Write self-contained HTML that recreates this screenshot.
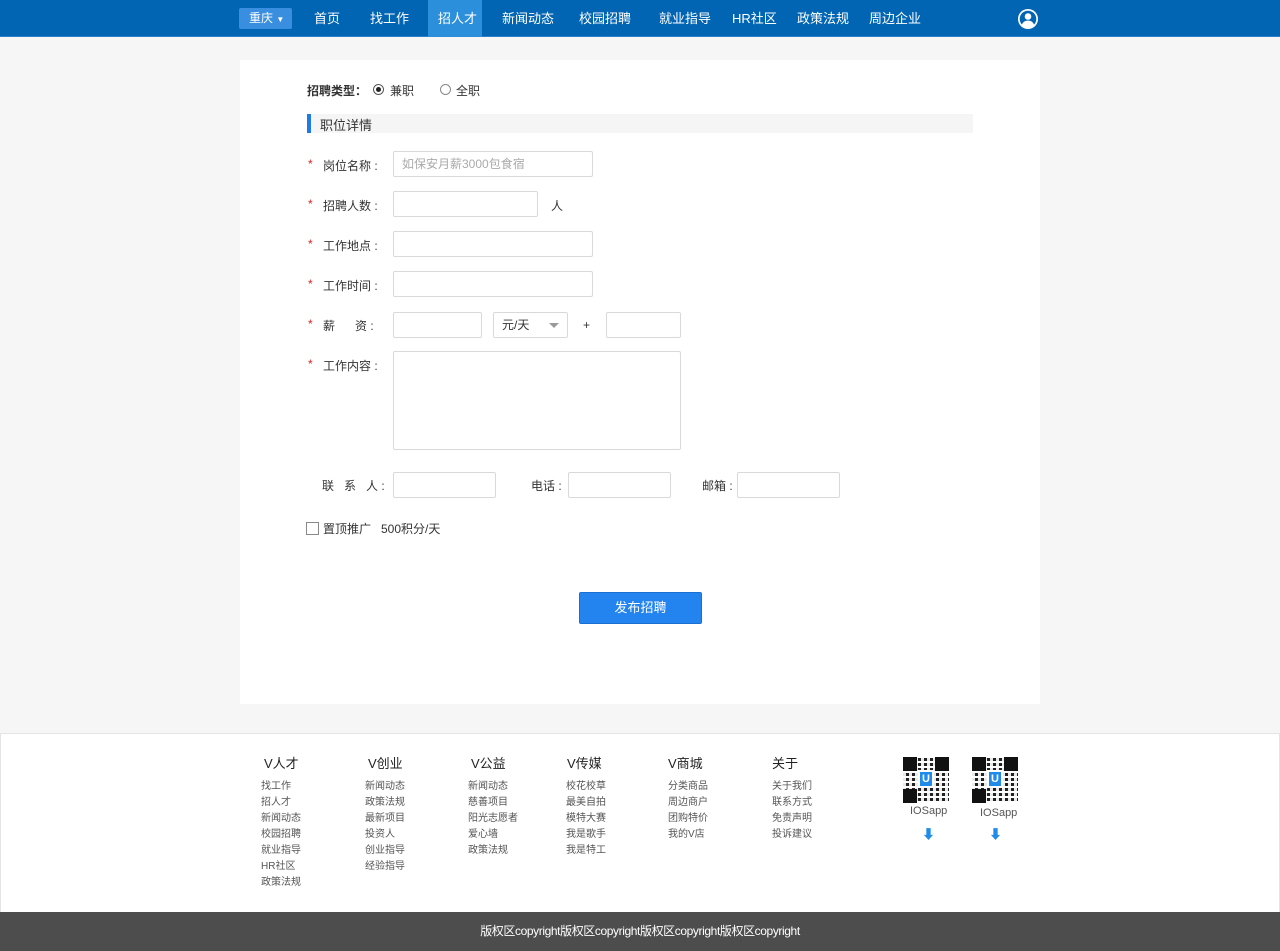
<!DOCTYPE html>
<html><head><meta charset="utf-8"><style>
*{margin:0;padding:0;box-sizing:border-box}
body{width:1280px;height:951px;background:#f6f6f6;font-family:"Liberation Sans","Noto Sans CJK SC",sans-serif;font-size:12px;color:#333;position:relative;overflow:hidden}
.a{position:absolute}
.nav{left:0;top:0;width:1280px;height:37px;background:#0265b3;border-bottom:1px solid #2b7fc8}
.nav span{position:absolute;top:0;line-height:37px;color:#fff;font-size:13px}
.card{left:240px;top:60px;width:800px;height:644px;background:#fff}
.in{position:absolute;border:1px solid #d9d9d9;height:26px;background:#fff;border-radius:2px}
.lb{position:absolute;font-size:12px;color:#333}
.st{position:absolute;color:#e02020;font-size:12px}
.foot{left:0;top:733px;width:1280px;height:180px;background:#fff;border:1px solid #e4e4e4}
.col{position:absolute;top:755px;font-size:10px;color:#555;line-height:16px}
.col b{display:block;font-weight:normal;font-size:13px;color:#222;margin-bottom:6px;line-height:18px}
.qr{position:absolute;width:46px;height:46px;background:
linear-gradient(#111,#111) 0 0/14px 14px no-repeat,
linear-gradient(#111,#111) 32px 0/14px 14px no-repeat,
linear-gradient(#111,#111) 0 32px/14px 14px no-repeat,
repeating-linear-gradient(90deg,rgba(255,255,255,.9) 0 3px,transparent 3px 6px),
repeating-linear-gradient(0deg,#fff 0 2px,#222 2px 5px)}
</style></head><body>
<div class="a nav">
<div class="a" style="left:239px;top:8px;width:53px;height:21px;background:#3a8ee0;border-radius:2px;color:#fff;font-size:12px;line-height:21px;padding-left:10px">重庆 <span style="position:static;font-size:8px;line-height:21px">▼</span></div>
<span style="left:314px">首页</span>
<span style="left:370px">找工作</span>
<div class="a" style="left:428px;top:0;width:54px;height:37px;background:#2c8fdc"></div>
<span style="left:438px">招人才</span>
<span style="left:502px">新闻动态</span>
<span style="left:579px">校园招聘</span>
<span style="left:659px">就业指导</span>
<span style="left:732px">HR社区</span>
<span style="left:797px">政策法规</span>
<span style="left:869px">周边企业</span>
<svg class="a" style="left:1017px;top:8px" width="22" height="22" viewBox="0 0 22 22"><circle cx="11" cy="11" r="10" fill="#fff"/><circle cx="11" cy="11" r="8.3" fill="#0265b3"/><circle cx="11" cy="8.5" r="3.3" fill="#fff"/><path d="M4.8 17c1-3.2 3.4-4.4 6.2-4.4s5.2 1.2 6.2 4.4a8 8 0 0 1-12.4 0z" fill="#fff"/></svg>
</div>
<div class="a card"></div>
<div class="lb" style="left:307px;top:82px;font-weight:bold">招聘类型：</div>
<div class="a" style="left:373px;top:84px;width:11px;height:11px;border:1px solid #555;border-radius:50%"><div class="a" style="left:2px;top:2px;width:5px;height:5px;border-radius:50%;background:#222"></div></div>
<div class="lb" style="left:390px;top:82px">兼职</div>
<div class="a" style="left:440px;top:84px;width:11px;height:11px;border:1px solid #888;border-radius:50%"></div>
<div class="lb" style="left:456px;top:82px">全职</div>
<div class="a" style="left:307px;top:114px;width:666px;height:19px;background:#f5f5f5;border-left:4px solid #1e7ae6"></div>
<div class="lb" style="left:320px;top:115px;font-size:13px">职位详情</div>

<div class="st" style="left:308px;top:157px">*</div><div class="lb" style="left:323px;top:157px">岗位名称 :</div>
<div class="in" style="left:393px;top:151px;width:200px;color:#aaa;padding-left:8px;line-height:24px">如保安月薪3000包食宿</div>
<div class="st" style="left:308px;top:197px">*</div><div class="lb" style="left:323px;top:197px">招聘人数 :</div>
<div class="in" style="left:393px;top:191px;width:145px"></div><div class="lb" style="left:551px;top:197px">人</div>
<div class="st" style="left:308px;top:237px">*</div><div class="lb" style="left:323px;top:237px">工作地点 :</div>
<div class="in" style="left:393px;top:231px;width:200px"></div>
<div class="st" style="left:308px;top:277px">*</div><div class="lb" style="left:323px;top:277px">工作时间 :</div>
<div class="in" style="left:393px;top:271px;width:200px"></div>
<div class="st" style="left:308px;top:317px">*</div><div class="lb" style="left:323px;top:317px">薪&nbsp;&nbsp;&nbsp;&nbsp;&nbsp;&nbsp;资 :</div>
<div class="in" style="left:393px;top:312px;width:89px"></div>
<div class="in" style="left:493px;top:312px;width:75px;padding-left:8px;line-height:24px">元/天<div class="a" style="left:55px;top:10px;width:0;height:0;border:5px solid transparent;border-top-color:#999"></div></div>
<div class="lb" style="left:583px;top:318px">+</div>
<div class="in" style="left:606px;top:312px;width:75px"></div>
<div class="st" style="left:308px;top:357px">*</div><div class="lb" style="left:323px;top:357px">工作内容 :</div>
<div class="in" style="left:393px;top:351px;width:288px;height:99px"></div>
<div class="lb" style="left:322px;top:477px">联&nbsp;&nbsp;&nbsp;系&nbsp;&nbsp;&nbsp;人 :</div>
<div class="in" style="left:393px;top:472px;width:103px"></div>
<div class="lb" style="left:531px;top:477px">电话 :</div>
<div class="in" style="left:568px;top:472px;width:103px"></div>
<div class="lb" style="left:702px;top:477px">邮箱 :</div>
<div class="in" style="left:737px;top:472px;width:103px"></div>
<div class="a" style="left:306px;top:522px;width:13px;height:13px;border:1px solid #888"></div>
<div class="lb" style="left:323px;top:520px">置顶推广</div>
<div class="lb" style="left:381px;top:520px">500积分/天</div>
<div class="a" style="left:579px;top:592px;width:123px;height:32px;background:#2384f0;border:1px solid #1a6fd0;border-radius:2px;color:#fff;font-size:13px;text-align:center;line-height:30px">发布招聘</div>

<div class="a foot"></div>
<div class="col" style="left:261px"><b style="margin-left:3px">V人才</b>找工作<br>招人才<br>新闻动态<br>校园招聘<br>就业指导<br>HR社区<br>政策法规</div>
<div class="col" style="left:365px"><b style="margin-left:3px">V创业</b>新闻动态<br>政策法规<br>最新项目<br>投资人<br>创业指导<br>经验指导</div>
<div class="col" style="left:468px"><b style="margin-left:3px">V公益</b>新闻动态<br>慈善项目<br>阳光志愿者<br>爱心墙<br>政策法规</div>
<div class="col" style="left:566px"><b style="margin-left:1px">V传媒</b>校花校草<br>最美自拍<br>模特大赛<br>我是歌手<br>我是特工</div>
<div class="col" style="left:668px"><b>V商城</b>分类商品<br>周边商户<br>团购特价<br>我的V店</div>
<div class="col" style="left:772px"><b>关于</b>关于我们<br>联系方式<br>免责声明<br>投诉建议</div>
<div class="qr" style="left:903px;top:757px"></div><div class="a" style="left:918px;top:770px;width:16px;height:18px;background:#1e8ce8;border:2px solid #fff;color:#fff;font-size:11px;line-height:14px;text-align:center;font-weight:bold">U</div>
<div class="qr" style="left:972px;top:757px"></div><div class="a" style="left:987px;top:770px;width:16px;height:18px;background:#1e8ce8;border:2px solid #fff;color:#fff;font-size:11px;line-height:14px;text-align:center;font-weight:bold">U</div>
<div class="lb" style="left:910px;top:805px;color:#555;font-size:11px">IOSapp</div>
<div class="lb" style="left:980px;top:807px;color:#555;font-size:11px">IOSapp</div>
<div class="lb" style="left:922px;top:824px;color:#1e8ce8;font-size:13px;font-weight:bold">⬇</div>
<div class="lb" style="left:989px;top:824px;color:#1e8ce8;font-size:13px;font-weight:bold">⬇</div>
<div class="a" style="left:0;top:912px;width:1280px;height:39px;background:#4d4d4d;color:#fff;text-align:center;line-height:38px;font-size:12px;letter-spacing:-0.4px">版权区copyright版权区copyright版权区copyright版权区copyright</div>
</body></html>
